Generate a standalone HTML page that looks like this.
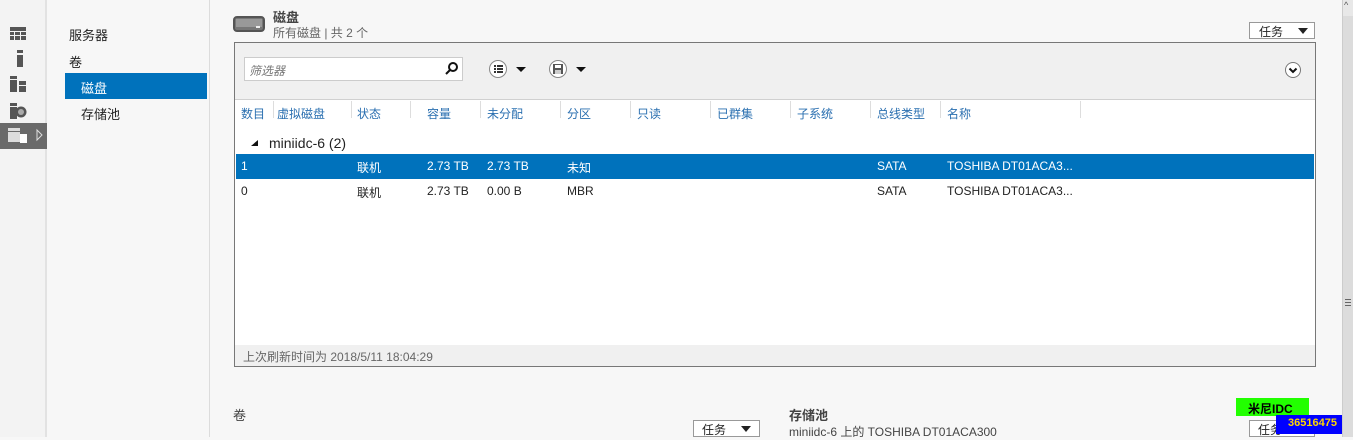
<!DOCTYPE html>
<html><head><meta charset="utf-8"><style>
*{margin:0;padding:0;box-sizing:border-box}
body{width:1353px;height:437px;overflow:hidden;background:#f7f7f7;font-family:"Liberation Sans","Noto Sans CJK SC",sans-serif;font-size:12px;color:#222;position:relative}
.a{position:absolute}
.t{white-space:nowrap}
</style></head><body>
<!-- left icon bar -->
<div class="a" style="left:0;top:0;width:47px;height:437px;background:#f3f3f3;border-right:2px solid #e2e2e2"></div>
<div class="a" style="left:0;top:123px;width:47px;height:26px;background:#6a6a6a"></div>
<svg class="a" style="left:8px;top:24px" width="40" height="125">
<g fill="#555">
<rect x="2" y="3" width="16" height="4"/><rect x="2" y="8" width="4" height="3"/><rect x="7" y="8" width="5" height="3"/><rect x="13" y="8" width="5" height="3"/><rect x="2" y="12" width="4" height="4"/><rect x="7" y="12" width="5" height="4"/><rect x="13" y="12" width="5" height="4"/>
<rect x="9" y="26" width="6" height="3"/><rect x="9" y="31" width="6" height="12"/>
<rect x="2" y="52" width="7" height="3"/><rect x="2" y="56" width="7" height="12"/><rect x="11" y="57" width="7" height="4"/><rect x="11" y="62" width="7" height="6"/>
<rect x="2" y="79" width="7" height="3"/><rect x="2" y="83" width="7" height="12"/><circle cx="13" cy="88" r="5.5"/>
</g>
<circle cx="13" cy="88" r="3" fill="#aaa"/>
<g fill="#ddd"><rect x="0" y="104" width="12" height="3"/><rect x="0" y="108" width="12" height="10"/><rect x="12" y="110" width="7" height="9" fill="#fff"/></g>
<path d="M29 106 L34 111 L29 116 Z" fill="none" stroke="#ddd"/>
</svg>
<!-- nav -->
<div class="a" style="left:49px;top:0;width:161px;height:437px;background:#f7f7f7;border-right:1px solid #dcdcdc"></div>
<div class="a t" style="left:69px;top:25px;font-size:13px">服务器</div>
<div class="a t" style="left:69px;top:52px;font-size:13px">卷</div>
<div class="a" style="left:65px;top:73px;width:142px;height:26px;background:#0072bc"></div>
<div class="a t" style="left:81px;top:78px;font-size:13px;color:#fff">磁盘</div>
<div class="a t" style="left:81px;top:104px;font-size:13px">存储池</div>
<!-- header -->
<div class="a" style="left:233px;top:16px;width:32px;height:16px;border:2px solid #555;border-radius:4px;background:#777"></div>
<div class="a" style="left:236px;top:19px;width:26px;height:8px;background:#999"></div>
<div class="a" style="left:256px;top:26px;width:4px;height:2px;background:#eee"></div>
<div class="a t" style="left:273px;top:7px;font-size:13px;font-weight:bold;color:#444">磁盘</div>
<div class="a t" style="left:273px;top:24px;color:#666">所有磁盘 | 共 2 个</div>
<div class="a" style="left:1249px;top:22px;width:66px;height:17px;border:1px solid #999;background:#fff"></div>
<div class="a t" style="left:1259px;top:23px">任务</div>
<div class="a" style="left:1298px;top:28px;border-left:5px solid transparent;border-right:5px solid transparent;border-top:6px solid #222"></div>
<!-- box -->
<div class="a" style="left:234px;top:42px;width:1082px;height:325px;border:1px solid #777;background:#fff"></div>
<div class="a" style="left:235px;top:43px;width:1080px;height:57px;background:#f0f0f0;border-bottom:1px solid #d0d0d0"></div>
<div class="a" style="left:244px;top:57px;width:219px;height:24px;border:1px solid #ccc;background:#fff"></div>
<div class="a t" style="left:249px;top:62px;color:#777;font-style:italic">筛选器</div>
<svg class="a" style="left:444px;top:61px" width="16" height="16"><circle cx="9" cy="6" r="4" fill="none" stroke="#111" stroke-width="2"/><path d="M6 9 L2 13" stroke="#111" stroke-width="2"/></svg>
<svg class="a" style="left:488px;top:58px" width="110" height="22"><circle cx="10" cy="11" r="8.5" fill="#fff" stroke="#888"/><g fill="#333"><rect x="6" y="7" width="2" height="2"/><rect x="9" y="7" width="6" height="2"/><rect x="6" y="10" width="2" height="2"/><rect x="9" y="10" width="6" height="2"/><rect x="6" y="13" width="2" height="2"/><rect x="9" y="13" width="6" height="2"/></g><path d="M28 9 L38 9 L33 14 Z" fill="#111"/>
<circle cx="70" cy="11" r="8.5" fill="#fff" stroke="#888"/><rect x="65" y="6" width="10" height="10" fill="#555"/><rect x="67" y="7" width="6" height="3" fill="#fff"/><rect x="67" y="12" width="6" height="4" fill="#ccc"/><path d="M88 9 L98 9 L93 14 Z" fill="#111"/></svg>
<svg class="a" style="left:1284px;top:61px" width="18" height="18"><circle cx="9" cy="9" r="7.5" fill="#fff" stroke="#777"/><path d="M5.5 7.5 L9 11 L12.5 7.5" fill="none" stroke="#111" stroke-width="2"/></svg>
<!-- column headers -->
<div class="a" style="left:235px;top:101px;width:1080px;height:20px;color:#2a6fb0">
<span class="a t" style="left:6px;top:4px">数目</span>
<span class="a t" style="left:42px;top:4px">虚拟磁盘</span>
<span class="a t" style="left:122px;top:4px">状态</span>
<span class="a t" style="left:192px;top:4px">容量</span>
<span class="a t" style="left:252px;top:4px">未分配</span>
<span class="a t" style="left:332px;top:4px">分区</span>
<span class="a t" style="left:402px;top:4px">只读</span>
<span class="a t" style="left:482px;top:4px">已群集</span>
<span class="a t" style="left:562px;top:4px">子系统</span>
<span class="a t" style="left:642px;top:4px">总线类型</span>
<span class="a t" style="left:712px;top:4px">名称</span>
</div>
<div class="a" style="left:273px;top:101px;width:1px;height:17px;background:#ddd"></div>
<div class="a" style="left:351px;top:101px;width:1px;height:17px;background:#ddd"></div>
<div class="a" style="left:410px;top:101px;width:1px;height:17px;background:#ddd"></div>
<div class="a" style="left:480px;top:101px;width:1px;height:17px;background:#ddd"></div>
<div class="a" style="left:560px;top:101px;width:1px;height:17px;background:#ddd"></div>
<div class="a" style="left:630px;top:101px;width:1px;height:17px;background:#ddd"></div>
<div class="a" style="left:710px;top:101px;width:1px;height:17px;background:#ddd"></div>
<div class="a" style="left:790px;top:101px;width:1px;height:17px;background:#ddd"></div>
<div class="a" style="left:870px;top:101px;width:1px;height:17px;background:#ddd"></div>
<div class="a" style="left:940px;top:101px;width:1px;height:17px;background:#ddd"></div>
<div class="a" style="left:1080px;top:101px;width:1px;height:17px;background:#ddd"></div>
<!-- group -->
<div class="a" style="left:251px;top:140px;border-left:7px solid transparent;border-bottom:6px solid #111"></div>
<div class="a t" style="left:269px;top:135px;font-size:14px">miniidc-6 (2)</div>
<!-- rows -->
<div class="a" style="left:236px;top:154px;width:1078px;height:25px;background:#0072bc"></div>
<div class="a" style="left:235px;top:159px;width:1080px;color:#fff">
<span class="a t" style="left:6px">1</span><span class="a t" style="left:122px">联机</span><span class="a t" style="left:192px">2.73 TB</span><span class="a t" style="left:252px">2.73 TB</span><span class="a t" style="left:332px">未知</span><span class="a t" style="left:642px">SATA</span><span class="a t" style="left:712px">TOSHIBA DT01ACA3...</span></div>
<div class="a" style="left:235px;top:184px;width:1080px">
<span class="a t" style="left:6px">0</span><span class="a t" style="left:122px">联机</span><span class="a t" style="left:192px">2.73 TB</span><span class="a t" style="left:252px">0.00 B</span><span class="a t" style="left:332px">MBR</span><span class="a t" style="left:642px">SATA</span><span class="a t" style="left:712px">TOSHIBA DT01ACA3...</span></div>
<!-- footer -->
<div class="a" style="left:235px;top:345px;width:1080px;height:21px;background:#f0f0f0"></div>
<div class="a t" style="left:243px;top:348px;color:#666">上次刷新时间为 2018/5/11 18:04:29</div>
<!-- bottom -->
<div class="a t" style="left:233px;top:405px;font-size:13px;color:#444">卷</div>
<div class="a" style="left:693px;top:420px;width:67px;height:17px;border:1px solid #999;background:#fff"></div>
<div class="a t" style="left:702px;top:421px">任务</div>
<div class="a" style="left:741px;top:426px;border-left:5px solid transparent;border-right:5px solid transparent;border-top:6px solid #222"></div>
<div class="a t" style="left:789px;top:405px;font-size:13px;color:#444;font-weight:bold">存储池</div>
<div class="a t" style="left:789px;top:423px;color:#444">miniidc-6 上的 TOSHIBA DT01ACA300</div>
<div class="a" style="left:1249px;top:420px;width:66px;height:17px;border:1px solid #999;background:#fff"></div>
<div class="a t" style="left:1258px;top:421px">任务</div>
<div class="a" style="left:1236px;top:398px;width:73px;height:18px;background:#22ff00"></div>
<div class="a t" style="left:1248px;top:400px;font-weight:bold;color:#000">米尼IDC</div>
<div class="a" style="left:1276px;top:415px;width:74px;height:19px;background:#0000ff"></div>
<div class="a t" style="left:1288px;top:417px;font-weight:bold;color:#ffd700;font-size:11px">36516475</div>
<!-- scrollbar -->
<div class="a" style="left:1342px;top:0;width:11px;height:437px;background:#e8e8e8;border-left:1px solid #ccc"></div>
<div class="a" style="left:1343px;top:16px;width:10px;height:421px;background:#dcdcdc"></div>
<div class="a t" style="left:1344px;top:0px;font-size:9px;color:#555">^</div>
<div class="a" style="left:1345px;top:299px;width:6px;height:1px;background:#666"></div>
<div class="a" style="left:1345px;top:302px;width:6px;height:1px;background:#666"></div>
<div class="a" style="left:1345px;top:305px;width:6px;height:1px;background:#666"></div>
</body></html>
